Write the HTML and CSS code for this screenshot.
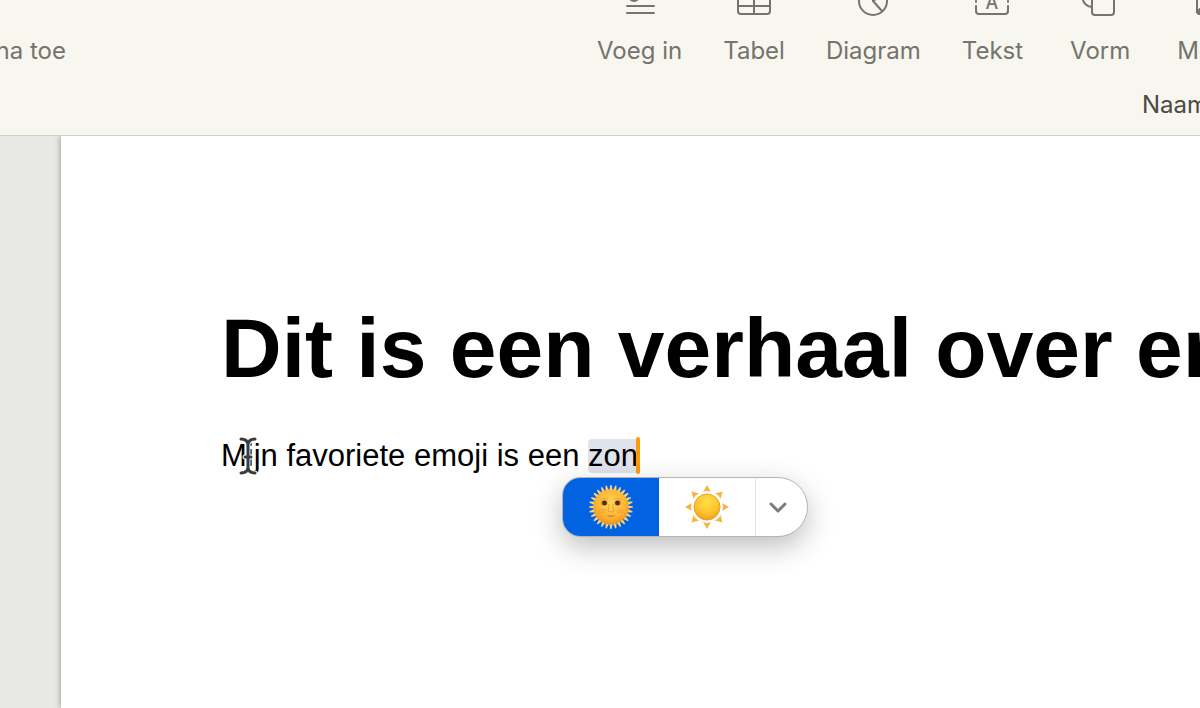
FILE: index.html
```html
<!doctype html>
<html lang="nl">
<head>
    <meta charset="UTF-8">
    <title>Naamloos</title>
    <link rel="stylesheet" href="styles.css">
</head>
<body>
<header class="header">
    <div class="toolbar">
        <div class="toolbar-left">
            <button type="button" class="tool">Voeg pagina toe</button>
        </div>
        <div class="toolbar-tools">
            <button type="button" class="tool">
                <svg class="icon" viewBox="0 0 36 32"><circle cx="12" cy="9" r="5"/><path d="M21 4h11M21 11h11M5 19h27M5 26h27"/></svg>
                Voeg in
            </button>
            <button type="button" class="tool">
                <svg class="icon" viewBox="0 0 36 32"><rect x="2" y="3" width="32" height="24" rx="3"/><path d="M2 11h32M2 19h32M18 3v24"/></svg>
                Tabel
            </button>
            <button type="button" class="tool">
                <svg class="icon" viewBox="0 0 36 32"><circle cx="18" cy="14" r="14"/><path d="M18 0v14l9 10M18 14l10-7"/></svg>
                Diagram
            </button>
            <button type="button" class="tool">
                <svg class="icon" viewBox="0 0 36 32"><path d="M2 12V6q0-3 3-3h26q3 0 3 3v6M2 14v1M34 14v1M2 19v5q0 3 3 3h26q3 0 3-3v-5"/><text class="icon-text" x="18" y="22">A</text></svg>
                Tekst
            </button>
            <button type="button" class="tool tool-wide">
                <svg class="icon" viewBox="0 0 36 32"><path d="M10 20A10 10 0 1 1 20 7"/><rect x="10" y="7" width="22" height="21" rx="3"/></svg>
                Vorm
            </button>
            <button type="button" class="tool">
                <svg class="icon" viewBox="0 0 36 32"><rect x="3" y="3" width="31" height="24" rx="3"/><path class="fill" d="M3 25l8-8 6 5 7-8 10 9v4H5z"/></svg>
                Media
            </button>
        </div>
    </div>
    <div class="doc-name">Naamloos</div>
</header>
<main class="canvas">
    <article class="page">
        <h1 class="title">Dit is een verhaal over emoji</h1>
        <p class="text"><span class="pointed">Mijn<svg class="cursor" viewBox="0 0 20 40"><path class="cursor-edge" d="M3 3q6 0 7 5q1-5 7-5M10 8v24M7 21h6M3 37q6 0 7-5q1 5 7 5"/><path class="cursor-line" d="M3 3q6 0 7 5q1-5 7-5M10 8v24M7 21h6M3 37q6 0 7-5q1 5 7 5"/></svg></span> favoriete emoji is een <span class="word">zon<span class="caret"></span><span class="picker">
            <button type="button" class="pick pick-on" aria-label="Zon met gezicht">
                <svg class="emoji" viewBox="-23 -23 46 46">
                    <defs>
                        <radialGradient id="face" cx=".5" cy=".4" r=".6"><stop offset="0" stop-color="#ffd35c"/><stop offset=".65" stop-color="#fdb834"/><stop offset="1" stop-color="#ee9220"/></radialGradient>
                        <path id="ray" d="M-1.800-16L-.6-22H.6L1.800-16z"/>
                        <g id="rays">
                            <use href="#ray"/>
                            <use href="#ray" transform="rotate(12.857)"/>
                            <use href="#ray" transform="rotate(25.714)"/>
                            <use href="#ray" transform="rotate(38.571)"/>
                            <use href="#ray" transform="rotate(51.429)"/>
                            <use href="#ray" transform="rotate(64.286)"/>
                            <use href="#ray" transform="rotate(77.143)"/>
                        </g>
                    </defs>
                    <g fill="#fad07a">
                        <use href="#rays"/>
                        <use href="#rays" transform="rotate(90)"/>
                        <use href="#rays" transform="rotate(180)"/>
                        <use href="#rays" transform="rotate(270)"/>
                    </g>
                    <circle r="17.500" fill="url(#face)"/>
                    <ellipse cx="-9" cy="4" rx="4" ry="3" fill="#f59a35" opacity=".4"/>
                    <ellipse cx="9" cy="4" rx="4" ry="3" fill="#f59a35" opacity=".4"/>
                    <ellipse cx="-7" cy="-4" rx="3.500" ry="2.500" fill="#e49a2c"/>
                    <ellipse cx="7" cy="-4" rx="3.500" ry="2.500" fill="#e49a2c"/>
                    <circle cx="-6.500" cy="-4" r="2.400" fill="#4d2d12"/>
                    <circle cx="6.500" cy="-4" r="2.400" fill="#4d2d12"/>
                    <path d="M-11-7q4-3 8-1M11-7q-4-3-8-1M-2-3q0 4-1 7q3 2 6 0q-1-3-1-7" fill="none" stroke="#e09a32" stroke-width=".8"/>
                    <path d="M-5 8q5 1 10 0q-5 4-10 0z" fill="#d5752b"/>
                </svg>
            </button>
            <button type="button" class="pick" aria-label="Zon">
                <svg class="emoji" viewBox="-23 -23 46 46">
                    <defs>
                        <radialGradient id="sun" cx=".5" cy=".3" r=".75"><stop offset="0" stop-color="#ffe04a"/><stop offset=".6" stop-color="#fcc32b"/><stop offset="1" stop-color="#ef961b"/></radialGradient>
                        <path id="beam" d="M-4-15L0-22L4-15q-4-2-8 0z"/>
                    </defs>
                    <g fill="#f7b443">
                        <use href="#beam"/>
                        <use href="#beam" transform="rotate(45)"/>
                        <use href="#beam" transform="rotate(90)"/>
                        <use href="#beam" transform="rotate(135)"/>
                        <use href="#beam" transform="rotate(180)"/>
                        <use href="#beam" transform="rotate(225)"/>
                        <use href="#beam" transform="rotate(270)"/>
                        <use href="#beam" transform="rotate(315)"/>
                    </g>
                    <circle r="13" fill="url(#sun)" stroke="#eea126"/>
                </svg>
            </button>
            <button type="button" class="pick pick-more" aria-label="Meer">
                <svg class="chevron" viewBox="0 0 18 12"><path d="M2 3l7 7 7-7"/></svg>
            </button>
        </span></span></p>
    </article>
</main>
</body>
</html>
```
FILE: styles.css
```css
html, body, h1, p { margin: 0; padding: 0; }
* { box-sizing: border-box; }
body { display: flex; flex-direction: column; height: 100vh; overflow: hidden; background: #e8e9e4; font-family: "Liberation Sans", Arial, sans-serif; }
button { margin: 0; padding: 0; border: 0; background: none; font: inherit; color: inherit; }

/* toolbar */
.header { flex: none; overflow: hidden; padding-bottom: 14px; border-bottom: 1px solid #cfcfca; background: #f7f6ef; font: 24px/32px Inter, sans-serif; color: #74736d; }
.toolbar { display: flex; align-items: flex-end; height: 67px; }
.toolbar-left { display: flex; flex: none; justify-content: flex-end; width: 66px; margin-right: 531px; }
.toolbar-tools { display: flex; gap: 41px; }
.tool { display: flex; flex: none; flex-direction: column; align-items: center; gap: 16px; white-space: nowrap; }
.tool-wide { padding: 0 6px; }
.icon { width: 36px; height: 32px; fill: none; stroke: #74736d; stroke-width: 2; stroke-linecap: round; }
.icon .fill { fill: #74736d; }
.icon-text { fill: #74736d; stroke: none; font-size: 18px; font-weight: 500; text-anchor: middle; }
.doc-name { padding: 22px 0 0 1142px; color: #4a4943; white-space: nowrap; }

/* document */
.canvas { flex: 1; display: flex; padding-left: 61px; overflow: hidden; }
.page { flex: 1; min-width: 0; padding: 162px 0 0 160px; background: #fff; box-shadow: 0 0 6px rgba(0, 0, 0, .4); color: #000; }
.title { font-size: 84px; line-height: 100px; white-space: nowrap; }
.text { padding-top: 38px; font-size: 31px; line-height: 40px; white-space: nowrap; }
.word { position: relative; display: inline-block; height: 34px; line-height: 34px; border-radius: 4px; background: #dfe3ec; }
.caret { position: absolute; top: -2px; right: -2px; width: 4px; height: 37px; border-radius: 2px; background: #ff9a0c; }
.pointed { position: relative; }
.cursor { position: absolute; top: -2px; left: 17px; width: 20px; height: 40px; fill: none; stroke-linecap: round; }
.cursor-edge { stroke: #fff; stroke-width: 5; }
.cursor-line { stroke: #3c3c3c; stroke-width: 3; }

/* emoji picker */
.picker { position: absolute; top: 38px; left: -26px; display: flex; width: 246px; height: 60px; overflow: hidden; border: 1px solid #b4b4b4; border-radius: 18px 30px 30px 18px; background: #fff; box-shadow: 0 10px 28px rgba(0, 0, 0, .25); }
.pick { display: flex; flex: none; align-items: center; justify-content: center; width: 96px; }
.pick-on { background: #0163e1; }
.pick-more { flex: 1; padding-right: 8px; border-left: 1px solid #e4e4e4; }
.emoji { width: 46px; height: 46px; }
.chevron { width: 18px; height: 12px; fill: none; stroke: #7b7b7b; stroke-width: 3; stroke-linecap: round; stroke-linejoin: round; }
```
